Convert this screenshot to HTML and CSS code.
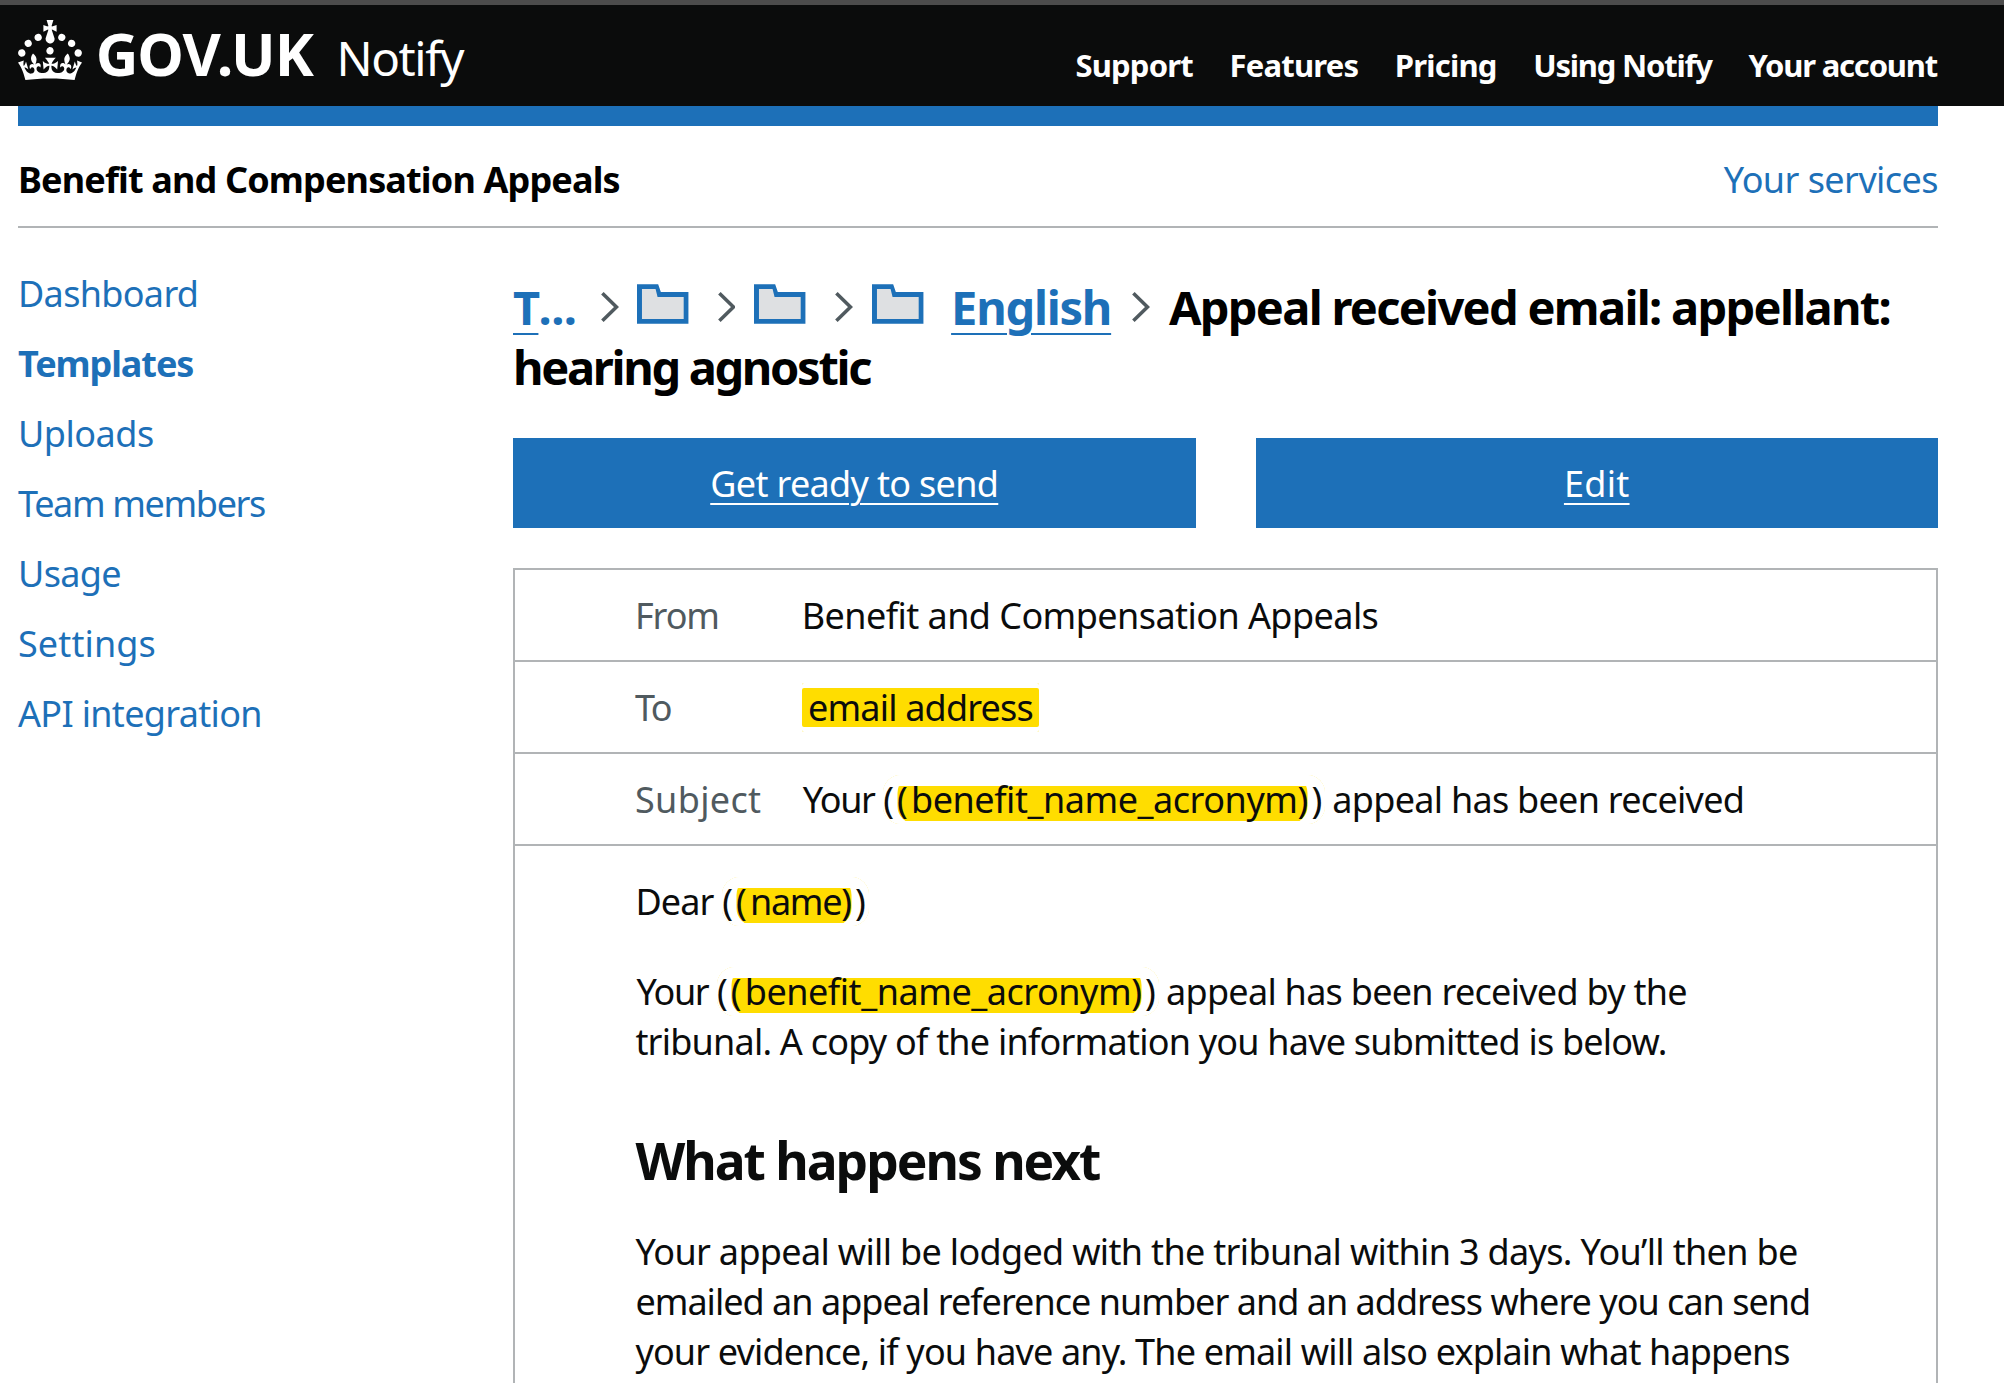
FILE: index.html
```html
<!DOCTYPE html>
<html lang="en">
<head>
<meta charset="utf-8">
<title>Appeal received email: appellant: hearing agnostic – GOV.UK Notify</title>
<link rel="stylesheet" href="styles.css">
</head>
<body>
<svg class="defs" aria-hidden="true">
  <symbol id="chevron" viewBox="0 0 18 33"><path d="M1.4 1.2 15.6 15 1.4 28.8" fill="none" stroke="#505a5f" stroke-width="3.6"/></symbol>
  <symbol id="folder" viewBox="0 0 52 41"><path d="M0 0H21.3L24 8H52V40H0Z" fill="#1d70b8"/><path d="M5 5H18.7L20.7 13H47V35H5Z" fill="#dee0e2"/></symbol>
</svg>
<header class="header">
  <div class="header-inner">
    <a class="brand">
      <svg class="crown" viewBox="0 0 32 30" fill="#fff"><path fill-rule="evenodd" d="M22.6 10.4c-1 .4-2-.1-2.4-1-.4-.9.1-2 1-2.4.9-.4 2 .1 2.4 1s-.1 2-1 2.4m-5.9 6.7c-.9.4-2-.1-2.4-1-.4-.9.1-2 1-2.4.9-.4 2 .1 2.4 1s-.1 2-1 2.4m10.8-3.7c-1 .4-2-.1-2.4-1-.4-.9.1-2 1-2.4.9-.4 2 .1 2.4 1s0 2-1 2.4m3.3 4.8c-1 .4-2-.1-2.4-1-.4-.9.1-2 1-2.4.9-.4 2 .1 2.4 1s-.1 2-1 2.4M17 4.7l2.3 1.2V2.5l-2.3.7-.2-.2.9-3h-3.4l.9 3-.2.2c-.1.1-2.3-.7-2.3-.7v3.4L15 4.7c.1.1.1.2.2.2l-1.3 4c-.1.2-.1.4-.1.6 0 1.1.8 2 1.9 2.2h.7c1-.2 1.9-1.1 1.9-2.1 0-.2 0-.4-.1-.6l-1.3-4c-.1-.2 0-.2.1-.3m-7.6 5.7c.9.4 2-.1 2.4-1 .4-.9-.1-2-1-2.4-.9-.4-2 .1-2.4 1s0 2 1 2.4m-5 3c.9.4 2-.1 2.4-1 .4-.9-.1-2-1-2.4-.9-.4-2 .1-2.4 1s.1 2 1 2.4m-3.2 4.8c.9.4 2-.1 2.4-1 .4-.9-.1-2-1-2.4-.9-.4-2 .1-2.4 1s0 2 1 2.4m14.8 11c4.4 0 8.6.3 12.3.8 1.1-4.5 2.4-7 3.7-8.8l-2.5-.9c.2 1.3.3 1.9 0 2.7-.4-.4-.8-1.1-1.1-2.3l-1.2 4c.7-.5 1.3-.8 2-.9-1.1 2.5-2.6 3.1-3.5 3-1.1-.2-1.7-1.2-1.5-2.1.3-1.2 1.5-1.5 2.1-.1 1.1-2.3-.8-3-2-2.3 1.9-1.9 2.1-3.5.6-5.6-2.1 1.6-2.1 3.2-1.2 5.5-1.2-1.4-3.2-.6-2.5 1.6.9-1.4 2.1-.5 1.9.8-.2 1.1-1.7 2.1-3.5 1.9-2.7-.2-2.9-2.1-2.9-3.6.7-.1 1.9.5 2.9 1.9l.4-4.3c-1.1 1.1-2.1 1.4-3.2 1.4.4-1.2 2.1-3 2.1-3h-5.4s1.7 1.9 2.1 3c-1.1 0-2.1-.2-3.2-1.4l.4 4.3c1-1.4 2.2-2 2.9-1.9-.1 1.5-.2 3.4-2.9 3.6-1.9.2-3.4-.8-3.5-1.9-.2-1.3 1-2.2 1.9-.8.7-2.3-1.2-3-2.5-1.6.9-2.2.9-3.9-1.2-5.5-1.5 2-1.3 3.7.6 5.6-1.2-.7-3.1 0-2 2.3.6-1.4 1.8-1.1 2.1.1.2.9-.3 1.9-1.5 2.1-.9.2-2.4-.5-3.5-3 .6 0 1.2.3 2 .9l-1.2-4c-.3 1.1-.7 1.9-1.1 2.3-.3-.8-.2-1.4 0-2.7l-2.9.9C1.3 23 2.6 25.5 3.7 30c3.7-.5 7.9-.8 12.3-.8"/></svg>
      <span class="logotype">GOV.UK</span>
      <span class="product">Notify</span>
    </a>
    <nav class="topnav">
      <a>Support</a>
      <a>Features</a>
      <a>Pricing</a>
      <a class="tight">Using Notify</a>
      <a class="tight">Your account</a>
    </nav>
  </div>
</header>
<div class="container">
  <div class="bluebar"></div>
  <div class="servicebar">
    <span class="service">Benefit and Compensation Appeals</span>
    <a class="services-link">Your services</a>
  </div>
  <div class="columns">
    <nav class="sidenav">
      <a>Dashboard</a>
      <a class="current">Templates</a>
      <a class="uploads">Uploads</a>
      <a class="team">Team members</a>
      <a>Usage</a>
      <a class="settings">Settings</a>
      <a>API integration</a>
    </nav>
    <main>
      <h1><span class="crumbs"><span class="root"><a class="crumb-link">T</a><span class="dots">...</span></span><svg class="chevron"><use href="#chevron"/></svg><svg class="folder"><use href="#folder"/></svg><svg class="chevron"><use href="#chevron"/></svg><svg class="folder"><use href="#folder"/></svg><svg class="chevron"><use href="#chevron"/></svg><svg class="folder"><use href="#folder"/></svg><a class="crumb-link parent">English</a><svg class="chevron last"><use href="#chevron"/></svg></span>Appeal received email: appellant: <span class="line2">hearing agnostic</span></h1>
      <div class="actions">
        <a class="action"><span>Get ready to send</span></a>
        <a class="action"><span class="edit">Edit</span></a>
      </div>
      <section class="message">
        <dl>
          <div class="row"><dt class="from">From</dt><dd>Benefit and Compensation Appeals</dd></div>
          <div class="row"><dt class="to">To</dt><dd><span class="recipient">email address</span></dd></div>
          <div class="row"><dt>Subject</dt><dd><span class="your">Your</span><span class="field">((<span class="field-name">benefit_name_acronym</span>))</span><span class="after">appeal has been received</span></dd></div>
        </dl>
        <div class="body">
          <p><span class="dear">Dear</span><span class="field">((<span class="field-name short">name</span>))</span></p>
          <p><span class="your">Your</span><span class="field">((<span class="field-name">benefit_name_acronym</span>))</span><span class="after">appeal has been received by the</span><br><span class="t2">tribunal. A copy of the information you have submitted is below.</span></p>
          <h2>What happens next</h2>
          <p>Your appeal will be lodged with the tribunal within 3 days. You’ll then be<br><span class="t4">emailed an appeal reference number and an address where you can send</span><br><span class="t3">your evidence, if you have any. The email will also explain what happens</span></p>
        </div>
      </section>
    </main>
  </div>
</div>
</body>
</html>
```

FILE: styles.css
```css
* { box-sizing: border-box; }
html, body { margin: 0; height: 1383px; overflow: hidden; }
body { background: #fff; color: #0b0c0c; font: 36px/50px "Noto Sans", "Open Sans", sans-serif; letter-spacing: -0.67px; }
h1, h2, p, dl, dd { margin: 0; }
.defs { display: none; }

.header { height: 106px; background: #0b0c0c; border-top: 5px solid #4c4c4c; color: #fff; }
.header-inner { display: flex; justify-content: space-between; width: 1920px; margin-left: 18px; }
.brand { display: flex; align-items: flex-start; line-height: 60px; padding-top: 15px; }
.crown { width: 64px; height: 60px; }
.logotype { margin: 3px 0 0 13.7px; font-size: 59px; font-weight: 700; letter-spacing: -1.04px; }
.product { margin: 8px 0 0 23.6px; font-size: 47.6px; letter-spacing: -1.4px; }
.topnav { display: flex; gap: 36.6px; padding: 40px 1px 0 0; font-size: 31px; line-height: 40px; font-weight: 700; letter-spacing: -0.8px; }
.tight { letter-spacing: -1.2px; }

.container { width: 1920px; margin-left: 18px; }
.bluebar { height: 20px; background: #1d70b8; }
.servicebar { display: flex; justify-content: space-between; height: 102px; padding-top: 29px; border-bottom: 2px solid #b1b4b6; }
.service { font-weight: 700; letter-spacing: -0.85px; color: #000; }
.services-link { color: #1d70b8; letter-spacing: -0.56px; }

.columns { display: grid; grid-template-columns: 495px 1425px; }
.sidenav { display: flex; flex-direction: column; gap: 20px; padding-top: 41px; color: #1d70b8; }
.current { font-weight: 700; letter-spacing: -1.09px; }
.uploads { letter-spacing: -0.48px; }
.team { letter-spacing: -1.35px; }
.settings { letter-spacing: 0.11px; }

main { padding-top: 49px; }
h1 { font-size: 47px; line-height: 60px; letter-spacing: -1.7px; color: #000; }
.crumbs { display: inline-flex; align-items: baseline; width: 656px; color: #1d70b8; }
.root { width: 59px; }
.dots { letter-spacing: -0.49px; }
.crumb-link { text-decoration: underline 2px; text-underline-offset: 8px; }
.chevron { width: 18px; height: 33px; margin: 0 18px 0 29px; }
.folder { width: 52px; height: 41px; }
.folder + .chevron { margin-right: 19px; }
.parent { margin-left: 27.5px; letter-spacing: -1.25px; }
.parent + .chevron.last { margin: 0 19px 0 21px; }
.line2 { letter-spacing: -2.33px; }

.actions { display: grid; grid-template-columns: 1fr 1fr; gap: 60px; margin-top: 41px; }
.action { height: 90px; padding-top: 21px; background: #1d70b8; color: #fff; text-align: center; text-decoration: underline 2px; text-underline-offset: 6px; }
.edit { letter-spacing: 0.3px; }

.message { margin-top: 40px; height: 815px; overflow: hidden; border: 2px solid #b1b4b6; border-bottom: 0; }
.row { display: flex; height: 92px; padding: 21px 0 0 120px; border-bottom: 2px solid #b1b4b6; }
dt { width: 166.7px; color: #505a5f; letter-spacing: 0.33px; }
.from { letter-spacing: -1.1px; }
.to { letter-spacing: -1.8px; }
dd { letter-spacing: -0.56px; }
.recipient { margin-left: 0.3px; padding: 0 6px; background: #fd0; border-radius: 2px; letter-spacing: -0.81px; box-shadow: inset 0 5px #fff, inset 0 -5px #fff; }
.your { display: inline-block; width: 81.5px; padding-left: 1px; letter-spacing: -1.4px; }
.dear { display: inline-block; width: 86.8px; letter-spacing: -0.9px; }
.field { letter-spacing: 3.1px; background: #fd0; border-radius: 18px; box-shadow: inset 14.5px 0 #fff, inset -17.5px 0 #fff, inset 0 11px #fff, inset 0 -3px #fff; }
.field-name { letter-spacing: -0.46px; }
.short { letter-spacing: -1.3px; }
.after { margin-left: 7px; letter-spacing: -0.72px; }

.body { padding: 31px 90px 0 120.4px; white-space: nowrap; }
.body p + p { margin-top: 40px; }
h2 { margin: 58px 0 32px; font-size: 51.5px; line-height: 70px; letter-spacing: -2px; }
.t2 { letter-spacing: -0.78px; }
.t3 { letter-spacing: -0.84px; }
.t4 { letter-spacing: -0.98px; }
```
